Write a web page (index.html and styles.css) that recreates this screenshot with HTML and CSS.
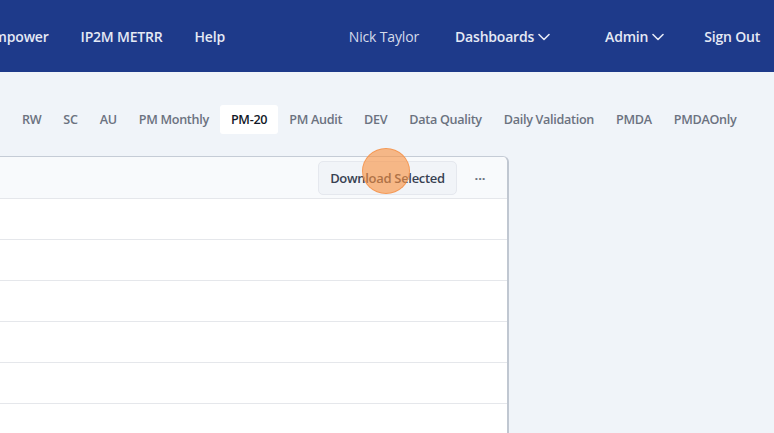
FILE: index.html
```html
<!DOCTYPE html>
<html lang="en">
<head>
<meta charset="utf-8">
<title>PM-20</title>
<link rel="stylesheet" href="styles.css">
</head>
<body>
<header class="topnav">
  <nav class="nav-left">
    <a class="nav-link">Empower</a>
    <a class="nav-link">IP2M METRR</a>
    <a class="nav-link">Help</a>
  </nav>
  <nav class="nav-right">
    <span class="user">Nick Taylor</span>
    <a class="nav-link dd dash">Dashboards
      <svg class="chev" viewBox="0 0 12 8" width="12" height="8"><path d="M1 1.5 L6 6.5 L11 1.5" fill="none" stroke="currentColor" stroke-width="1.6" stroke-linecap="round" stroke-linejoin="round"/></svg>
    </a>
    <a class="nav-link dd admin">Admin
      <svg class="chev" viewBox="0 0 12 8" width="12" height="8"><path d="M1 1.5 L6 6.5 L11 1.5" fill="none" stroke="currentColor" stroke-width="1.6" stroke-linecap="round" stroke-linejoin="round"/></svg>
    </a>
    <a class="nav-link signout">Sign Out</a>
  </nav>
</header>

<main class="content">
  <ul class="tabs">
    <li class="tab">RW</li>
    <li class="tab">SC</li>
    <li class="tab">AU</li>
    <li class="tab">PM Monthly</li>
    <li class="tab active">PM-20</li>
    <li class="tab">PM Audit</li>
    <li class="tab">DEV</li>
    <li class="tab">Data Quality</li>
    <li class="tab">Daily Validation</li>
    <li class="tab">PMDA</li>
    <li class="tab">PMDAOnly</li>
  </ul>

  <section class="card">
    <div class="card-head">
      <button class="btn">Download Selected</button>
      <span class="more">&middot;&middot;&middot;</span>
      <span class="click-marker"></span>
    </div>
    <div class="row"></div>
    <div class="row"></div>
    <div class="row"></div>
    <div class="row"></div>
    <div class="row"></div>
    <div class="row"></div>
  </section>
</main>
</body>
</html>
```

FILE: styles.css
```css
* { box-sizing: border-box; }
html, body {
  margin: 0;
  padding: 0;
  overflow: hidden;
}
body {
  width: 774px;
  height: 433px;
  background: #f0f4f9;
  font-family: "Open Sans", "Noto Sans", sans-serif;
}

.topnav {
  height: 72px;
  background: #1e3a8a;
  display: flex;
  align-items: center;
  justify-content: space-between;
  padding-right: 14px;
}
.nav-left {
  display: flex;
  align-items: center;
  gap: 32px;
  margin-left: -14px;
}
.nav-link {
  color: #e5e9f5;
  font-size: 14px;
  font-weight: 600;
  letter-spacing: -0.2px;
  white-space: nowrap;
}
.nav-right {
  display: flex;
  align-items: center;
}
.user {
  color: #d5dbea;
  font-size: 14px;
  letter-spacing: -0.15px;
  margin-right: 36px;
}
.dd {
  display: flex;
  align-items: center;
  gap: 4px;
}
.chev { display: block; margin-top: 1px; }
.dash { margin-right: 55px; }
.admin { margin-right: 40px; }

.content {
  padding-top: 33px;
}
.tabs {
  list-style: none;
  margin: 0 0 22px 0;
  padding: 0 0 0 11px;
  display: flex;
  align-items: center;
}
.tab {
  padding: 6px 11px;
  height: 29px;
  font-size: 12.6px;
  font-weight: 600;
  letter-spacing: -0.3px;
  color: #6b7280;
  white-space: nowrap;
  border-radius: 3px;
}
.tab.active {
  background: #ffffff;
  color: #111827;
}

.card {
  width: 520px;
  margin-left: -11px;
  background: #ffffff;
  border: 1px solid #c5ccd6;
  border-right: 2px solid #c0c7d1;
  border-radius: 0 6px 0 0;
}
.card-head {
  position: relative;
  height: 42px;
  background: #f8fafc;
  border-bottom: 1px solid #e5e7eb;
  border-radius: 0 6px 0 0;
  display: flex;
  align-items: center;
  justify-content: flex-end;
  padding-right: 20px;
}
.btn {
  height: 34px;
  width: 139px;
  background: #f1f4f8;
  border: 1px solid #e5e8ee;
  border-radius: 5px;
  font-family: inherit;
  font-size: 13px;
  font-weight: 600;
  letter-spacing: -0.3px;
  color: #374151;
  margin-right: 16px;
}
.more {
  color: #6b7280;
  font-size: 13px;
  width: 14px;
  text-align: center;
  font-weight: 700;
}
.click-marker {
  position: absolute;
  left: 372px;
  top: -9px;
  width: 48px;
  height: 46px;
  border-radius: 50%;
  background: rgba(249, 146, 64, 0.62);
  border: 1.5px solid rgba(245, 150, 80, 0.9);
}
.row {
  height: 41px;
  border-bottom: 1px solid #e5e7eb;
}
```
